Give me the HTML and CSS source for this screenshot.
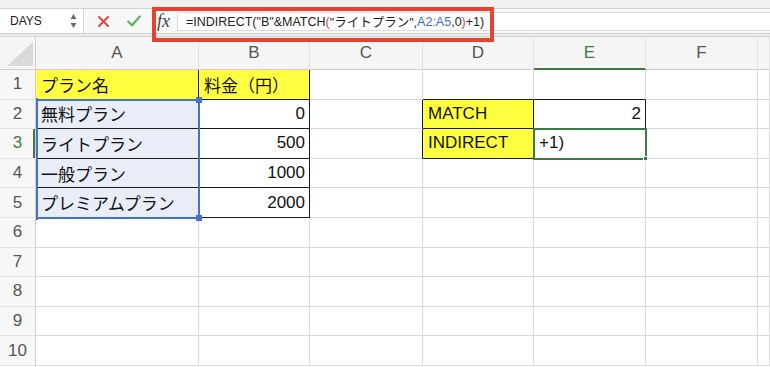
FILE: index.html
```html
<!DOCTYPE html>
<html lang="ja">
<head>
<meta charset="utf-8">
<title>Sheet</title>
<link rel="stylesheet" href="styles.css">
</head>
<body>
<div class="topstrip"></div>
<div class="fbar">
  <div class="namebox">
    <span>DAYS</span>
    <svg class="stepper" viewBox="0 0 7 16"><path d="M3.5 1 L6.5 6 L0.5 6 Z" fill="#6a6a6a"/><path d="M0.5 10 L6.5 10 L3.5 15 Z" fill="#6a6a6a"/></svg>
  </div>
  <div class="actions">
    <svg class="icon-x" viewBox="0 0 11 11"><path d="M1 1 L10 10 M10 1 L1 10" stroke="#df4a40" stroke-width="2" stroke-linecap="round"/></svg>
    <svg class="icon-check" viewBox="0 0 14 12"><path d="M1.2 6.5 L5 10.2 L12.8 1.5" stroke="#5cb35f" stroke-width="2.2" fill="none" stroke-linecap="round" stroke-linejoin="round"/></svg>
    <span class="fx">fx</span>
  </div>
  <div class="finput">=INDIRECT("B"&amp;MATCH<span class="red">(</span>"ライトプラン",<span class="blue">A2:A5</span>,0<span class="red">)</span>+1)</div>
</div>
<div class="band"></div>
<div class="wrap">
  <div class="sheet">
    <div class="h corner"><svg viewBox="0 0 26 24" class="tri"><path d="M0 24 L26 24 L26 0 Z" fill="#d9d9d9"/></svg></div>
    <div class="h">A</div>
    <div class="h">B</div>
    <div class="h">C</div>
    <div class="h">D</div>
    <div class="h hE">E</div>
    <div class="h">F</div>
    <div class="h hG"></div>

    <div class="rh">1</div>
    <div class="c y tb">プラン名</div>
    <div class="c y tb">料金（円）</div>
    <div class="c"></div>
    <div class="c tbb"></div>
    <div class="c tbb"></div>
    <div class="c"></div>
    <div class="c"></div>

    <div class="rh">2</div>
    <div class="c s tb">無料プラン</div>
    <div class="c n tb">0</div>
    <div class="c tbr"></div>
    <div class="c y tb">MATCH</div>
    <div class="c n tb">2</div>
    <div class="c"></div>
    <div class="c"></div>

    <div class="rh rh3">3</div>
    <div class="c s tb">ライトプラン</div>
    <div class="c n tb">500</div>
    <div class="c tbr"></div>
    <div class="c y tb">INDIRECT</div>
    <div class="c tb">+1)</div>
    <div class="c"></div>
    <div class="c"></div>

    <div class="rh">4</div>
    <div class="c s tb">一般プラン</div>
    <div class="c n tb">1000</div>
    <div class="c"></div>
    <div class="c"></div>
    <div class="c"></div>
    <div class="c"></div>
    <div class="c"></div>

    <div class="rh">5</div>
    <div class="c s tb">プレミアムプラン</div>
    <div class="c n tb">2000</div>
    <div class="c"></div>
    <div class="c"></div>
    <div class="c"></div>
    <div class="c"></div>
    <div class="c"></div>

    <div class="rh">6</div>
    <div class="c"></div><div class="c"></div><div class="c"></div><div class="c"></div><div class="c"></div><div class="c"></div><div class="c"></div>
    <div class="rh">7</div>
    <div class="c"></div><div class="c"></div><div class="c"></div><div class="c"></div><div class="c"></div><div class="c"></div><div class="c"></div>
    <div class="rh">8</div>
    <div class="c"></div><div class="c"></div><div class="c"></div><div class="c"></div><div class="c"></div><div class="c"></div><div class="c"></div>
    <div class="rh">9</div>
    <div class="c"></div><div class="c"></div><div class="c"></div><div class="c"></div><div class="c"></div><div class="c"></div><div class="c"></div>
    <div class="rh">10</div>
    <div class="c"></div><div class="c"></div><div class="c"></div><div class="c"></div><div class="c"></div><div class="c"></div><div class="c"></div>
  </div>
  <div class="overlay">
    <div class="sel">
      <span class="hd tl"></span><span class="hd tr"></span><span class="hd bl"></span><span class="hd br"></span>
    </div>
    <div class="act"><span class="ah"></span></div>
  </div>
</div>
<div class="callout"></div>
</body>
</html>
```

FILE: styles.css
```css
* { box-sizing: border-box; margin: 0; padding: 0; }
html, body { width: 770px; height: 367px; overflow: hidden; }
body {
  font-family: "Liberation Sans", "Noto Sans CJK JP", Arial, sans-serif;
  background: #fff;
  color: #111;
  position: relative;
}

.topstrip { height: 9px; background: #f0f0f0; border-bottom: 1px solid #d3d3d3; }

.fbar { height: 24px; display: flex; align-items: stretch; background: #f8f8f8; }
.namebox {
  width: 84px; background: #fff; border-right: 1px solid #d2d2d2;
  display: flex; align-items: center; justify-content: space-between;
  padding: 0 6px 0 10px; font-size: 12px; color: #222;
}
.stepper { width: 7px; height: 16px; display: block; }
.actions { width: 93px; display: flex; align-items: center; }
.icon-x { width: 11px; height: 11px; margin-left: 14px; display: block; }
.icon-check { width: 14px; height: 12px; margin-left: 18px; display: block; }
.fx {
  margin-left: 16px; font-family: "Liberation Serif", "DejaVu Serif", serif;
  font-style: italic; font-size: 18px; color: #444; line-height: 1;
}
.finput {
  flex: 1; margin: 3px 0 2px; background: #fff;
  border: 1px solid #dcdcdc; border-right: none;
  display: flex; align-items: center; padding-left: 8px;
  font-size: 12.5px; color: #222; white-space: nowrap;
}
.red { color: #d8382f; }
.blue { color: #3a6cd2; }

.band { height: 4px; background: #ececec; border-top: 1px solid #cdcdcd; border-bottom: 1px solid #d3d3d3; }

.wrap { position: relative; }
.sheet, .overlay {
  display: grid;
  grid-template-columns: 36px 163px 111px 113px 111px 112px 112px 1fr;
  grid-template-rows: 33px repeat(10, 29.6px);
}
.overlay { position: absolute; inset: 0; pointer-events: none; }

.sheet > div {
  border-right: 1px solid #dadada; border-bottom: 1px solid #dadada;
  display: flex; align-items: center;
  font-size: 17px; white-space: nowrap; overflow: hidden;
}
.h {
  background: #f5f5f5; justify-content: center; color: #555;
  border-bottom-color: #cfcfcf !important; border-right-color: #e2e2e2 !important;
}
.corner { justify-content: flex-end; align-items: flex-end !important; padding: 0 2px 3px 0; border-right-color: #cfcfcf !important; }
.tri { width: 26px; height: 24px; display: block; }
.hE { color: #3d7b45; border-bottom: 2px solid #3d7b45 !important; }
.rh {
  background: #f7f7f7; justify-content: center; color: #555;
  border-right-color: #cfcfcf !important; border-bottom-color: #e2e2e2 !important;
}
.rh3 { color: #3d7b45; box-shadow: inset -2px 0 0 #3d7b45; }
.c { padding: 0 4px 0 5px; }
.n { justify-content: flex-end; }
.y { background: #ffff40; }
.s { background: #e8edf7; }
.tb { border-right-color: #1a1a1a !important; border-bottom-color: #1a1a1a !important; }
.tbb { border-bottom-color: #1a1a1a !important; }
.tbr { border-right-color: #1a1a1a !important; }

.sel {
  grid-column: 2; grid-row: 3 / 7;
  border: 2px solid #4472c9; margin: -1px -1px -1px 0; position: relative;
}
.hd { position: absolute; background: #4472c9; }
.hd.tl { left: -2px; top: -3px; width: 2px; height: 5px; }
.hd.bl { left: -2px; bottom: -3px; width: 2px; height: 5px; }
.hd.tr { right: -4px; top: -4px; width: 6px; height: 6px; }
.hd.br { right: -4px; bottom: -4px; width: 6px; height: 6px; }

.act {
  grid-column: 6; grid-row: 4;
  border: 2px solid #3d7b45; margin: -1px -1px -1px -1px; position: relative;
}
.ah { position: absolute; right: -3px; bottom: -3px; width: 5px; height: 5px; background: #3d7b45; border: 1px solid #fff; }

.callout {
  position: absolute; left: 152px; top: 7px; width: 342px; height: 35px;
  border: 4px solid #e5432f;
}
```
